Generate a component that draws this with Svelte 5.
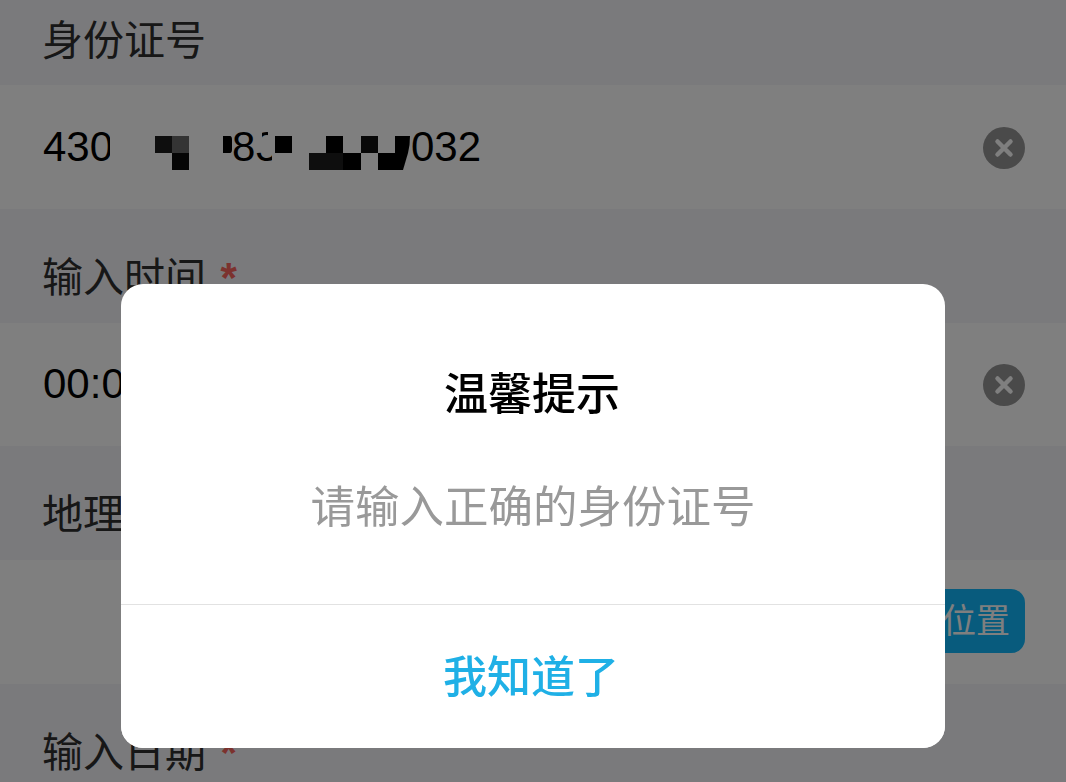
<script>
  const blocks = [
    [155, 136, 17, 17, '#1c1c1c'], [172, 136, 17, 17, '#686868'], [172, 153, 17, 17, '#0a0a0a'],
    [275, 136, 17, 17, '#000000'],
    [309, 153, 34, 17, '#1c1c1c'], [326, 136, 17, 17, '#000000'], [343, 153, 18, 17, '#000000'],
    [361, 136, 17, 17, '#111111'], [378, 153, 17, 17, '#000000']
  ];
  const masks = [
    [255, 128, 7, 24], [268, 128, 7, 25], [262, 142, 6, 10]
  ];
</script>

<div class="page">
  <div class="label">身份证号</div>
  <div class="row">
    <div class="value">
      <span class="clip-a">430</span>
      <span class="clip-b">83</span>
      <span class="tail">032</span>
    </div>
    <svg class="mosaic" width="500" height="60" viewBox="100 120 500 60" aria-hidden="true">
      {#each masks as m}
        <rect x={m[0]} y={m[1]} width={m[2]} height={m[3]} fill="#fff" />
      {/each}
      {#each blocks as b}
        <rect x={b[0]} y={b[1]} width={b[2]} height={b[3]} fill={b[4]} />
      {/each}
      <path d="M223 136h7q2 0 2 4v9q0 4-2 4h-7z" fill="#000" />
      <path d="M395 136h15q0 9-2 17l-5 17h-8z" fill="#000" />
    </svg>
    <button class="clear" aria-label="清除">
      <svg width="42" height="42" viewBox="0 0 42 42"><path d="M14.5 14.5l13 13M27.5 14.5l-13 13" /></svg>
    </button>
  </div>

  <div class="label">输入时间 <i>*</i></div>
  <div class="row">
    <div class="value">00:00</div>
    <button class="clear" aria-label="清除">
      <svg width="42" height="42" viewBox="0 0 42 42"><path d="M14.5 14.5l13 13M27.5 14.5l-13 13" /></svg>
    </button>
  </div>

  <div class="label">地理位置 <i>*</i></div>
  <div class="row">
    <div class="value"></div>
    <button class="locate">获取位置</button>
  </div>

  <div class="label">输入日期 <i>*</i></div>
</div>

<div class="overlay">
  <div class="modal">
    <div class="body">
      <h2>温馨提示</h2>
      <p>请输入正确的身份证号</p>
    </div>
    <button class="ok">我知道了</button>
  </div>
</div>

<style>
  :global(body) {
    margin: 0;
    overflow: hidden;
    font-family: "Liberation Sans", "Noto Sans CJK SC", sans-serif;
  }
  .page {
    height: 782px;
    overflow: hidden;
    background: #f4f4f8;
    color: #111;
    box-sizing: border-box;
  }
  .label {
    height: 114px;
    box-sizing: border-box;
    padding: 44px 0 0 42px;
    font-size: 41px;
    line-height: 50px;
    color: #2e2e2e;
    white-space: nowrap;
  }
  .label:first-child {
    margin-top: -29px;
    padding-top: 45px;
  }
  .label i {
    font-style: normal;
    font-weight: 700;
    font-size: 42px;
    color: #f8655c;
    margin-left: 3px;
  }
  .row {
    height: 123.5px;
    background: #fff;
    display: flex;
    align-items: center;
    justify-content: space-between;
    padding: 0 41px 0 43px;
    box-sizing: border-box;
    position: relative;
  }
  .value {
    display: flex;
    font-size: 42px;
    line-height: 50px;
    color: #000;
    white-space: nowrap;
  }
  .clip-a {
    width: 67px;
    overflow: hidden;
  }
  .clip-b {
    width: 40px;
    margin-left: 122px;
    overflow: hidden;
  }
  .tail {
    margin-left: 139px;
  }
  .mosaic {
    position: absolute;
    left: 100px;
    top: 35px;
  }
  .clear {
    width: 42px;
    height: 42px;
    margin-top: 2px;
    border: 0;
    padding: 0;
    border-radius: 50%;
    background: #949494;
    display: flex;
  }
  .clear path {
    stroke: #fff;
    stroke-width: 4.5;
    stroke-linecap: round;
    fill: none;
  }
  .locate {
    margin-left: auto;
    height: 64px;
    margin-top: -1px;
    padding: 0 15px;
    border: 0;
    border-radius: 14px;
    background: #10b6fa;
    color: #fff;
    font: 34px/64px "Liberation Sans", "Noto Sans CJK SC", sans-serif;
    white-space: nowrap;
  }
  .overlay {
    position: fixed;
    inset: 0;
    background: rgba(0, 0, 0, .5);
    display: flex;
    justify-content: center;
    align-items: flex-start;
    padding-top: 284px;
    box-sizing: border-box;
  }
  .modal {
    width: 824px;
    height: 464px;
    background: #fff;
    border-radius: 22px;
    display: flex;
    flex-direction: column;
    overflow: hidden;
  }
  .body {
    height: 320px;
    border-bottom: 1px solid #e2e2e2;
    text-align: center;
    flex: none;
  }
  h2 {
    margin: 79px 2px 0 0;
    font-size: 44px;
    line-height: 64px;
    font-weight: 500;
    color: #000;
  }
  p {
    margin: 49px 0 0;
    font-size: 44.5px;
    line-height: 64px;
    color: #999;
  }
  .ok {
    flex: 1;
    border: 0;
    background: #fff;
    color: #1fb0e6;
    font: 500 44px/64px "Liberation Sans", "Noto Sans CJK SC", sans-serif;
    padding: 3px 4px 0 0;
  }
</style>
